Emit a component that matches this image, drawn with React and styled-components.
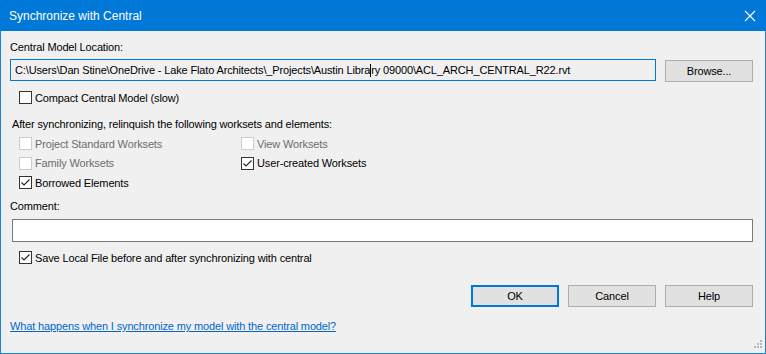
import styled, { createGlobalStyle } from "styled-components";

const Global = createGlobalStyle`
    html, body {
        margin: 0;
        padding: 0;
        background: #f0f0f0;
    }
    body {
        font-family: "Liberation Sans", Arial, sans-serif;
        font-size: 11px;
        color: #000;
    }
`;

const Window = styled.div`
    width: 766px;
    height: 354px;
    box-sizing: border-box;
    display: flex;
    flex-direction: column;
    background: #f0f0f0;
    border: 1px solid #1883d7;
    border-top: 0;
    position: relative;
`;

const TitleBar = styled.div`
    height: 31px;
    margin: 0 -1px;
    background: #0078d7;
    color: #fff;
    display: flex;
    align-items: center;
    justify-content: space-between;
    padding: 0 10px 0 9px;
    font-size: 12px;
`;

const Close = styled.div`
    width: 12px;
    height: 12px;
    display: flex;
`;

const Body = styled.div`
    flex: 1;
    display: flex;
    flex-direction: column;
    padding: 0 12px 0 9px;
    letter-spacing: -0.14px;
`;

const Label = styled.div`
    line-height: 15px;
    margin-top: ${p => p.$top || 0}px;
    margin-left: ${p => p.$indent || 0}px;
`;

const PathRow = styled.div`
    display: flex;
    align-items: flex-start;
    gap: 9px;
    margin-top: 4px;
`;

const TextField = styled.div`
    flex: ${p => (p.$grow ? 1 : "none")};
    height: ${p => p.$h || 22}px;
    box-sizing: border-box;
    background: ${p => (p.$focused ? "#f0f0f0" : "#fff")};
    border: 1px solid ${p => (p.$focused ? "#0078d7" : "#7a7a7a")};
    display: flex;
    align-items: center;
    padding-left: 4px;
    white-space: pre;
    overflow: hidden;
    margin-top: ${p => p.$top || 0}px;
    margin-left: ${p => p.$indent || 0}px;
`;

const Caret = styled.span`
    display: inline-block;
    width: 1px;
    height: 13px;
    background: #000;
`;

const Button = styled.div`
    width: 88px;
    height: 22px;
    box-sizing: border-box;
    background: #e1e1e1;
    border: 1px solid ${p => (p.$default ? "#0078d7" : "#adadad")};
    box-shadow: ${p => (p.$default ? "inset 0 0 0 1px #0078d7" : "none")};
    display: flex;
    align-items: center;
    justify-content: center;
    margin-top: ${p => p.$top || 0}px;
`;

const Check = styled.label`
    display: flex;
    align-items: center;
    gap: 3px;
    height: 13px;
    color: ${p => (p.$disabled ? "#6d6d6d" : "#000")};
    margin-top: ${p => p.$top || 0}px;
    margin-left: ${p => p.$indent || 0}px;
`;

const Box = styled.span`
    width: 13px;
    height: 13px;
    box-sizing: border-box;
    flex: none;
    background: #fff;
    border: 1px solid ${p => (p.$disabled ? "#cccccc" : "#333333")};
    display: flex;
`;

const Worksets = styled.div`
    display: grid;
    grid-template-columns: 222px 222px;
    grid-template-rows: 13px 13px 13px;
    row-gap: 6.5px;
    margin-top: 5px;
    margin-left: 9px;
`;

const Buttons = styled.div`
    display: flex;
    justify-content: flex-end;
    gap: 9px;
    margin-top: 21px;
`;

const Link = styled.a`
    color: #0066cc;
    text-decoration: underline;
    line-height: 15px;
    margin-top: 12px;
    align-self: flex-start;
`;

const Grip = styled.div`
    position: absolute;
    right: 2px;
    bottom: 2px;
    width: 11px;
    height: 11px;
`;

const CheckBox = ({ checked, disabled, children, top, indent }) => (
    <Check $disabled={disabled} $top={top} $indent={indent}>
        <Box $disabled={disabled}>
            {checked && (
                <svg width="11" height="11" viewBox="0 0 11 11">
                    <path d="M1.5 5.5 L4 8 L9.5 2.5" fill="none" stroke="#222" strokeWidth="1.1" />
                </svg>
            )}
        </Box>
        <span>{children}</span>
    </Check>
);

export default () => (
    <>
        <Global />
        <Window>
            <TitleBar>
                <span>Synchronize with Central</span>
                <Close>
                    <svg width="12" height="12" viewBox="0 0 12 12">
                        <path d="M1 1 L11 11 M11 1 L1 11" stroke="#fff" strokeWidth="1.1" />
                    </svg>
                </Close>
            </TitleBar>
            <Body>
                <Label $top={9}>Central Model Location:</Label>
                <PathRow>
                    <TextField $focused $grow>
                        C:\Users\Dan Stine\OneDrive - Lake Flato Architects\_Projects\Austin Libra<Caret />ry 09000\ACL_ARCH_CENTRAL_R22.rvt
                    </TextField>
                    <Button $top={1}>Browse...</Button>
                </PathRow>
                <CheckBox top={9} indent={9}>Compact Central Model (slow)</CheckBox>
                <Label $top={13} $indent={2}>After synchronizing, relinquish the following worksets and elements:</Label>
                <Worksets>
                    <CheckBox disabled>Project Standard Worksets</CheckBox>
                    <CheckBox disabled>View Worksets</CheckBox>
                    <CheckBox disabled>Family Worksets</CheckBox>
                    <CheckBox checked>User-created Worksets</CheckBox>
                    <CheckBox checked>Borrowed Elements</CheckBox>
                </Worksets>
                <Label $top={10}>Comment:</Label>
                <TextField $top={5} $h={23} $indent={2} />
                <CheckBox checked top={9} indent={9}>Save Local File before and after synchronizing with central</CheckBox>
                <Buttons>
                    <Button $default>OK</Button>
                    <Button>Cancel</Button>
                    <Button>Help</Button>
                </Buttons>
                <Link href="#">What happens when I synchronize my model with the central model?</Link>
            </Body>
            <Grip>
                <svg width="11" height="11" viewBox="0 0 11 11" fill="#b8b8b8">
                    <rect x="8" y="0" width="2" height="2" />
                    <rect x="5" y="3" width="2" height="2" />
                    <rect x="8" y="3" width="2" height="2" />
                    <rect x="2" y="6" width="2" height="2" />
                    <rect x="5" y="6" width="2" height="2" />
                    <rect x="8" y="6" width="2" height="2" />
                </svg>
            </Grip>
        </Window>
    </>
);
